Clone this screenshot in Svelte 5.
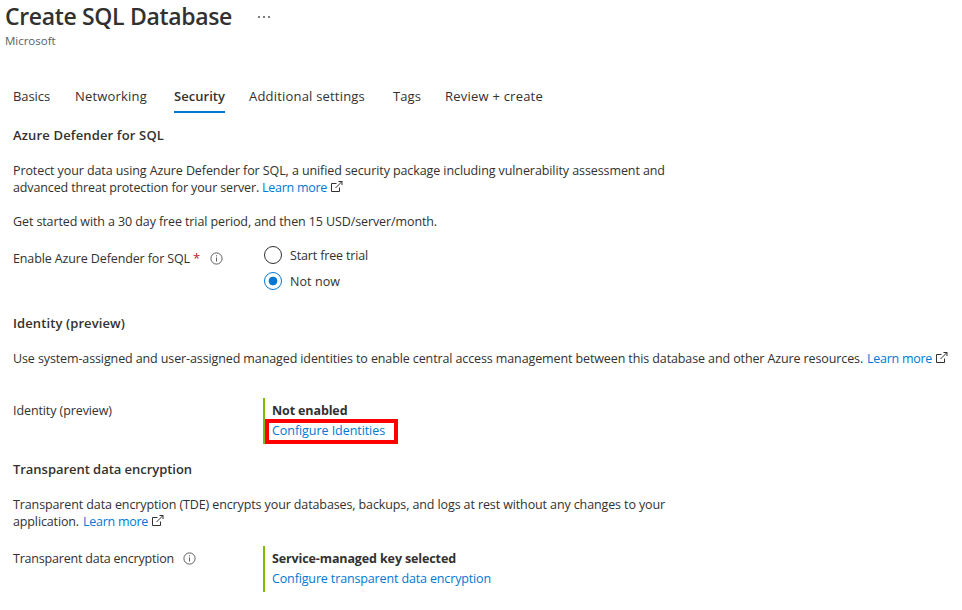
<script>
  const tabs = [
    { id: 'basics', label: 'Basics' },
    { id: 'networking', label: 'Networking' },
    { id: 'security', label: 'Security' },
    { id: 'additional', label: 'Additional settings' },
    { id: 'tags', label: 'Tags' },
    { id: 'review', label: 'Review + create' }
  ];
  let activeTab = $state('security');
  let plan = $state('later');
</script>

{#snippet external()}
  <svg class="external" width="12" height="12" viewBox="0 0 12 12" aria-hidden="true">
    <path d="M5.5 2.5h-5v8h8V6.5M7.5 .5h3.5V4M11 .5 4.5 7" />
  </svg>
{/snippet}

{#snippet info()}
  <svg class="info" width="13" height="13" viewBox="0 0 13 13" aria-hidden="true">
    <circle cx="6.5" cy="6.5" r="5.6" />
    <path d="M6.5 5.5v4M6.5 3.3v1.1" />
  </svg>
{/snippet}

<main>
  <header>
    <div class="title-row">
      <h1>Create SQL Database</h1>
      <span class="more"><i></i><i></i><i></i></span>
    </div>
    <div class="publisher">Microsoft</div>
  </header>

  <nav>
    {#each tabs as tab (tab.id)}
      <button class="tab {tab.id}" class:active={activeTab === tab.id} onclick={() => (activeTab = tab.id)}>{tab.label}</button>
    {/each}
  </nav>

  <section class="defender">
    <h2>Azure Defender for SQL</h2>
    <p>
      <span class="line protect">Protect your data using Azure Defender for SQL, a unified security package including vulnerability assessment and</span>
      <span class="line"><span class="advanced">advanced threat protection for your server.</span><a class="learn" href="#defender">Learn more</a>{@render external()}</span>
    </p>
    <p class="trial">Get started with a 30 day free trial period, and then 15 USD/server/month.</p>
    <div class="field">
      <div class="label"><span class="enable">Enable Azure Defender for SQL</span><span class="required">*</span>{@render info()}</div>
      <div class="radios">
        <label class="start"><input type="radio" value="trial" bind:group={plan} /><span>Start free trial</span></label>
        <label class="later"><input type="radio" value="later" bind:group={plan} /><span>Not now</span></label>
      </div>
    </div>
  </section>

  <section class="identity">
    <h2>Identity (preview)</h2>
    <p>
      <span class="line"><span class="managed">Use system-assigned and user-assigned managed identities to enable central access management between this database and other Azure resources.</span><a class="learn" href="#identity">Learn more</a>{@render external()}</span>
    </p>
    <div class="field">
      <div class="label"><span class="preview">Identity (preview)</span></div>
      <div class="status">
        <strong class="disabled">Not enabled</strong>
        <a class="configure-id" href="#identities">Configure Identities</a>
        <span class="highlight"></span>
      </div>
    </div>
  </section>

  <section class="encryption">
    <h2>Transparent data encryption</h2>
    <p>
      <span class="line tde">Transparent data encryption (TDE) encrypts your databases, backups, and logs at rest without any changes to your</span>
      <span class="line"><span class="application">application.</span><a class="learn" href="#encryption">Learn more</a>{@render external()}</span>
    </p>
    <div class="field">
      <div class="label"><span class="tde-label">Transparent data encryption</span>{@render info()}</div>
      <div class="status">
        <strong class="service">Service-managed key selected</strong>
        <a class="configure-tde" href="#key">Configure transparent data encryption</a>
      </div>
    </div>
  </section>
</main>

<style>
  :global(body) { margin: 0; background: #fff; }
  main {
    box-sizing: border-box;
    width: 962px;
    height: 610px;
    overflow: hidden;
    font: 12.5px/17px "Open Sans", "Noto Sans", sans-serif;
    color: #323130;
    white-space: nowrap;
  }
  header { padding: 1px 0 0 5px; height: 80px; box-sizing: border-box; }
  h1, h2, p { margin: 0; }
  h1 { font-size: 23px; line-height: 30px; font-weight: 600; letter-spacing: -0.34px; width: 227px; }
  .title-row { display: flex; gap: 26px; }
  .more { display: flex; gap: 3px; padding-top: 15px; }
  .more i { width: 2px; height: 2px; background: #55504e; border-radius: 50%; }
  .publisher { font-size: 11.5px; line-height: 16px; letter-spacing: -0.02px; color: #605e5c; margin-top: 2px; }

  nav { display: flex; padding-left: 13px; height: 33px; }
  .tab {
    box-sizing: border-box;
    height: 33px;
    margin: 0 25px 0 0;
    padding: 2px 0 0;
    border: 0;
    border-bottom: 2px solid transparent;
    background: none;
    color: inherit;
    font: 13px/29px "Open Sans", "Noto Sans", sans-serif;
    text-align: left;
  }
  .tab.active { font-weight: 600; border-bottom-color: #0078d4; }
  .basics { width: 37px; letter-spacing: -0.087px; }
  .networking { width: 73px; letter-spacing: 0.19px; margin-right: 26px; }
  .security { width: 51px; letter-spacing: 0.039px; margin-right: 24px; }
  .additional { width: 117px; letter-spacing: 0.196px; margin-right: 27px; }
  .tags { width: 28px; letter-spacing: 0.09px; margin-right: 24px; }
  .review { width: 99px; letter-spacing: 0.223px; }

  section { padding-left: 13px; }
  h2 { font-size: 13px; line-height: 18px; font-weight: 600; margin-bottom: 18px; }
  .defender { padding-top: 13px; height: 188px; box-sizing: border-box; }
  .defender h2 { letter-spacing: 0.152px; }
  .identity { padding-top: 13px; height: 146px; box-sizing: border-box; }
  .identity h2 { letter-spacing: 0.103px; }
  .encryption { padding-top: 13px; }
  .encryption h2 { letter-spacing: -0.041px; }

  .line { display: flex; height: 17px; }
  a { color: #0078d4; text-decoration: none; }
  .learn { letter-spacing: -0.27px; margin-left: 3px; width: 65px; }
  .external { margin: 2px 0 0 4px; fill: none; stroke: #323130; stroke-width: 1; }
  .protect { letter-spacing: -0.092px; }
  .advanced { letter-spacing: -0.13px; width: 246px; }
  .trial { letter-spacing: -0.106px; margin-top: 17px; }
  .managed { letter-spacing: -0.112px; width: 851px; }
  .tde { letter-spacing: -0.114px; }
  .application { letter-spacing: -0.13px; width: 67px; }

  .field { display: flex; }
  .label { display: flex; width: 250px; }
  .enable { letter-spacing: -0.124px; width: 178px; }
  .required { color: #a4262c; width: 10px; padding-left: 2px; font-size: 13px; }
  .info { margin: 2px 0 0 6.5px; fill: none; stroke: #605e5c; stroke-width: 1; }
  .preview { letter-spacing: -0.094px; }
  .tde-label { letter-spacing: -0.2px; width: 163px; }
  .defender .field { padding-top: 16px; }
  .defender .label { padding-top: 4px; }
  .radios { display: flex; flex-direction: column; gap: 8px; padding-left: 1px; }
  .radios label { display: flex; align-items: center; height: 18px; gap: 8px; }
  .start span { letter-spacing: -0.155px; }
  .later span { letter-spacing: 0.07px; }
  input {
    appearance: none;
    box-sizing: border-box;
    width: 18px;
    height: 18px;
    margin: 0;
    border: 1px solid #323130;
    border-radius: 50%;
    background: #fff;
  }
  input:checked { border-color: #0078d4; background: radial-gradient(circle, #0078d4 4px, #fff 4.7px); }

  .identity .field { padding-top: 31px; }
  .encryption .field { padding-top: 16px; }
  .identity .label, .encryption .label { padding-top: 4px; }
  .status {
    position: relative;
    box-sizing: border-box;
    height: 46px;
    border-left: 2px solid #7fba00;
    padding: 3px 0 0 7px;
    display: flex;
    flex-direction: column;
    line-height: 20px;
  }
  .disabled { letter-spacing: -0.12px; }
  .configure-id { letter-spacing: -0.06px; }
  .service { letter-spacing: -0.12px; }
  .configure-tde { letter-spacing: -0.14px; }
  .highlight {
    position: absolute;
    left: 0;
    top: 21px;
    box-sizing: border-box;
    width: 133px;
    height: 25px;
    border: 4px solid #f00;
  }
</style>
